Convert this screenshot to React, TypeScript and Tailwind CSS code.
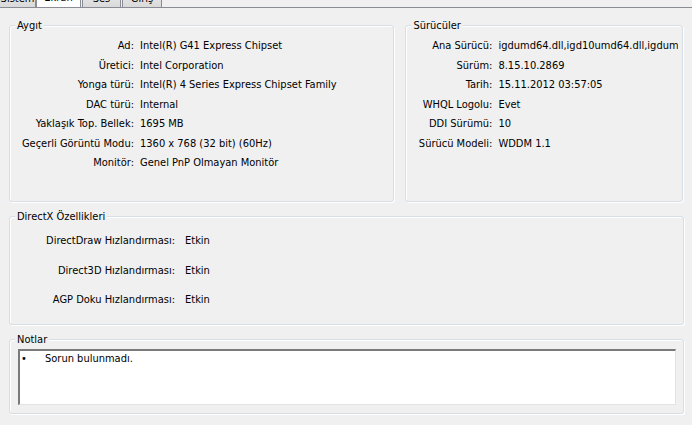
const aygit: [string, string][] = [
  ['Ad:', 'Intel(R) G41 Express Chipset'],
  ['Üretici:', 'Intel Corporation'],
  ['Yonga türü:', 'Intel(R) 4 Series Express Chipset Family'],
  ['DAC türü:', 'Internal'],
  ['Yaklaşık Top. Bellek:', '1695 MB'],
  ['Geçerli Görüntü Modu:', '1360 x 768 (32 bit) (60Hz)'],
  ['Monitör:', 'Genel PnP Olmayan Monitör'],
]

const suruculer: [string, string][] = [
  ['Ana Sürücü:', 'igdumd64.dll,igd10umd64.dll,igdumdx32.dll,igd10umd32.dll'],
  ['Sürüm:', '8.15.10.2869'],
  ['Tarih:', '15.11.2012 03:57:05'],
  ['WHQL Logolu:', 'Evet'],
  ['DDI Sürümü:', '10'],
  ['Sürücü Modeli:', 'WDDM 1.1'],
]

const directx: [string, string][] = [
  ['DirectDraw Hızlandırması:', 'Etkin'],
  ['Direct3D Hızlandırması:', 'Etkin'],
  ['AGP Doku Hızlandırması:', 'Etkin'],
]

function GroupBox({ title, className, children }: { title: string; className: string; children?: React.ReactNode }) {
  return (
    <div className={`relative rounded-[3px] border border-[#d5dfe5] shadow-[inset_1px_1px_0_#ffffff,1px_1px_0_#ffffff] ${className}`}>
      <span className="absolute left-[5px] top-[-7px] bg-[#f0f0f0] px-[2px] leading-[14px]">{title}</span>
      {children}
    </div>
  )
}

function Tab({ label, selected, w }: { label: string; selected?: boolean; w: string }) {
  return (
    <div
      className={`flex h-[22px] items-start justify-center border border-b-0 border-[#898c95] pt-[5px] ${w} ${
        selected ? 'h-[24px] bg-white relative z-10' : 'bg-gradient-to-b from-[#f2f2f2] to-[#d9d9d9]'
      }`}
    >
      {label}
    </div>
  )
}

export default function App() {
  return (
    <div
      className="h-[425px] w-[692px] overflow-hidden bg-[#f0f0f0] text-[11px] text-black"
      style={{ fontFamily: 'Tahoma, "DejaVu Sans Condensed", "Liberation Sans", sans-serif' }}
    >
      <div className="flex h-[7px] items-end overflow-hidden">
        <Tab label="Sistem" w="w-[37px] -ml-px" />
        <Tab label="Ekran" selected w="w-[45px] -mb-px" />
        <Tab label="Ses" w="w-[39px] ml-[1px]" />
        <Tab label="Giriş" w="w-[40px] ml-[1px]" />
      </div>
      <div className="h-[418px] border-t border-[#898c95] px-[9px] pt-[17px]">
        <div className="flex gap-[11px]">
          <GroupBox title="Aygıt" className="h-[177px] w-[386px]">
            <div className="grid grid-cols-[124px_1fr] gap-x-[6px] pt-[13px]">
              {aygit.map(([k, v]) => (
                <div key={k} className="contents">
                  <div className="h-[19.5px] text-right leading-[14px]">{k}</div>
                  <div className="h-[19.5px] whitespace-nowrap leading-[14px]">{v}</div>
                </div>
              ))}
            </div>
          </GroupBox>
          <GroupBox title="Sürücüler" className="h-[177px] w-[278px]">
            <div className="grid grid-cols-[86px_180px] gap-x-[6px] pt-[13px]">
              {suruculer.map(([k, v]) => (
                <div key={k} className="contents">
                  <div className="h-[19.5px] text-right leading-[14px]">{k}</div>
                  <div className="h-[19.5px] overflow-hidden whitespace-nowrap leading-[14px]">{v}</div>
                </div>
              ))}
            </div>
          </GroupBox>
        </div>
        <GroupBox title="DirectX Özellikleri" className="mt-[14px] h-[109px] w-[675px]">
          <div className="grid grid-cols-[165px_1fr] gap-x-[10px] pt-[17px]">
            {directx.map(([k, v]) => (
              <div key={k} className="contents">
                <div className="h-[29.5px] text-right leading-[14px]">{k}</div>
                <div className="h-[29.5px] leading-[14px]">{v}</div>
              </div>
            ))}
          </div>
        </GroupBox>
        <GroupBox title="Notlar" className="mt-[14px] h-[75px] w-[675px] px-[8px] pt-[9px]">
          <div className="h-[56px] w-[658px] border-l-2 border-t-2 border-b border-r border-l-[#7a7a7a] border-t-[#7a7a7a] border-b-[#e3e3e3] border-r-[#e3e3e3] bg-white">
            <div className="flex pl-[1px] pt-[1px] leading-[14px]">
              <span className="w-[24px]">•</span>
              <span>Sorun bulunmadı.</span>
            </div>
          </div>
        </GroupBox>
      </div>
    </div>
  )
}
